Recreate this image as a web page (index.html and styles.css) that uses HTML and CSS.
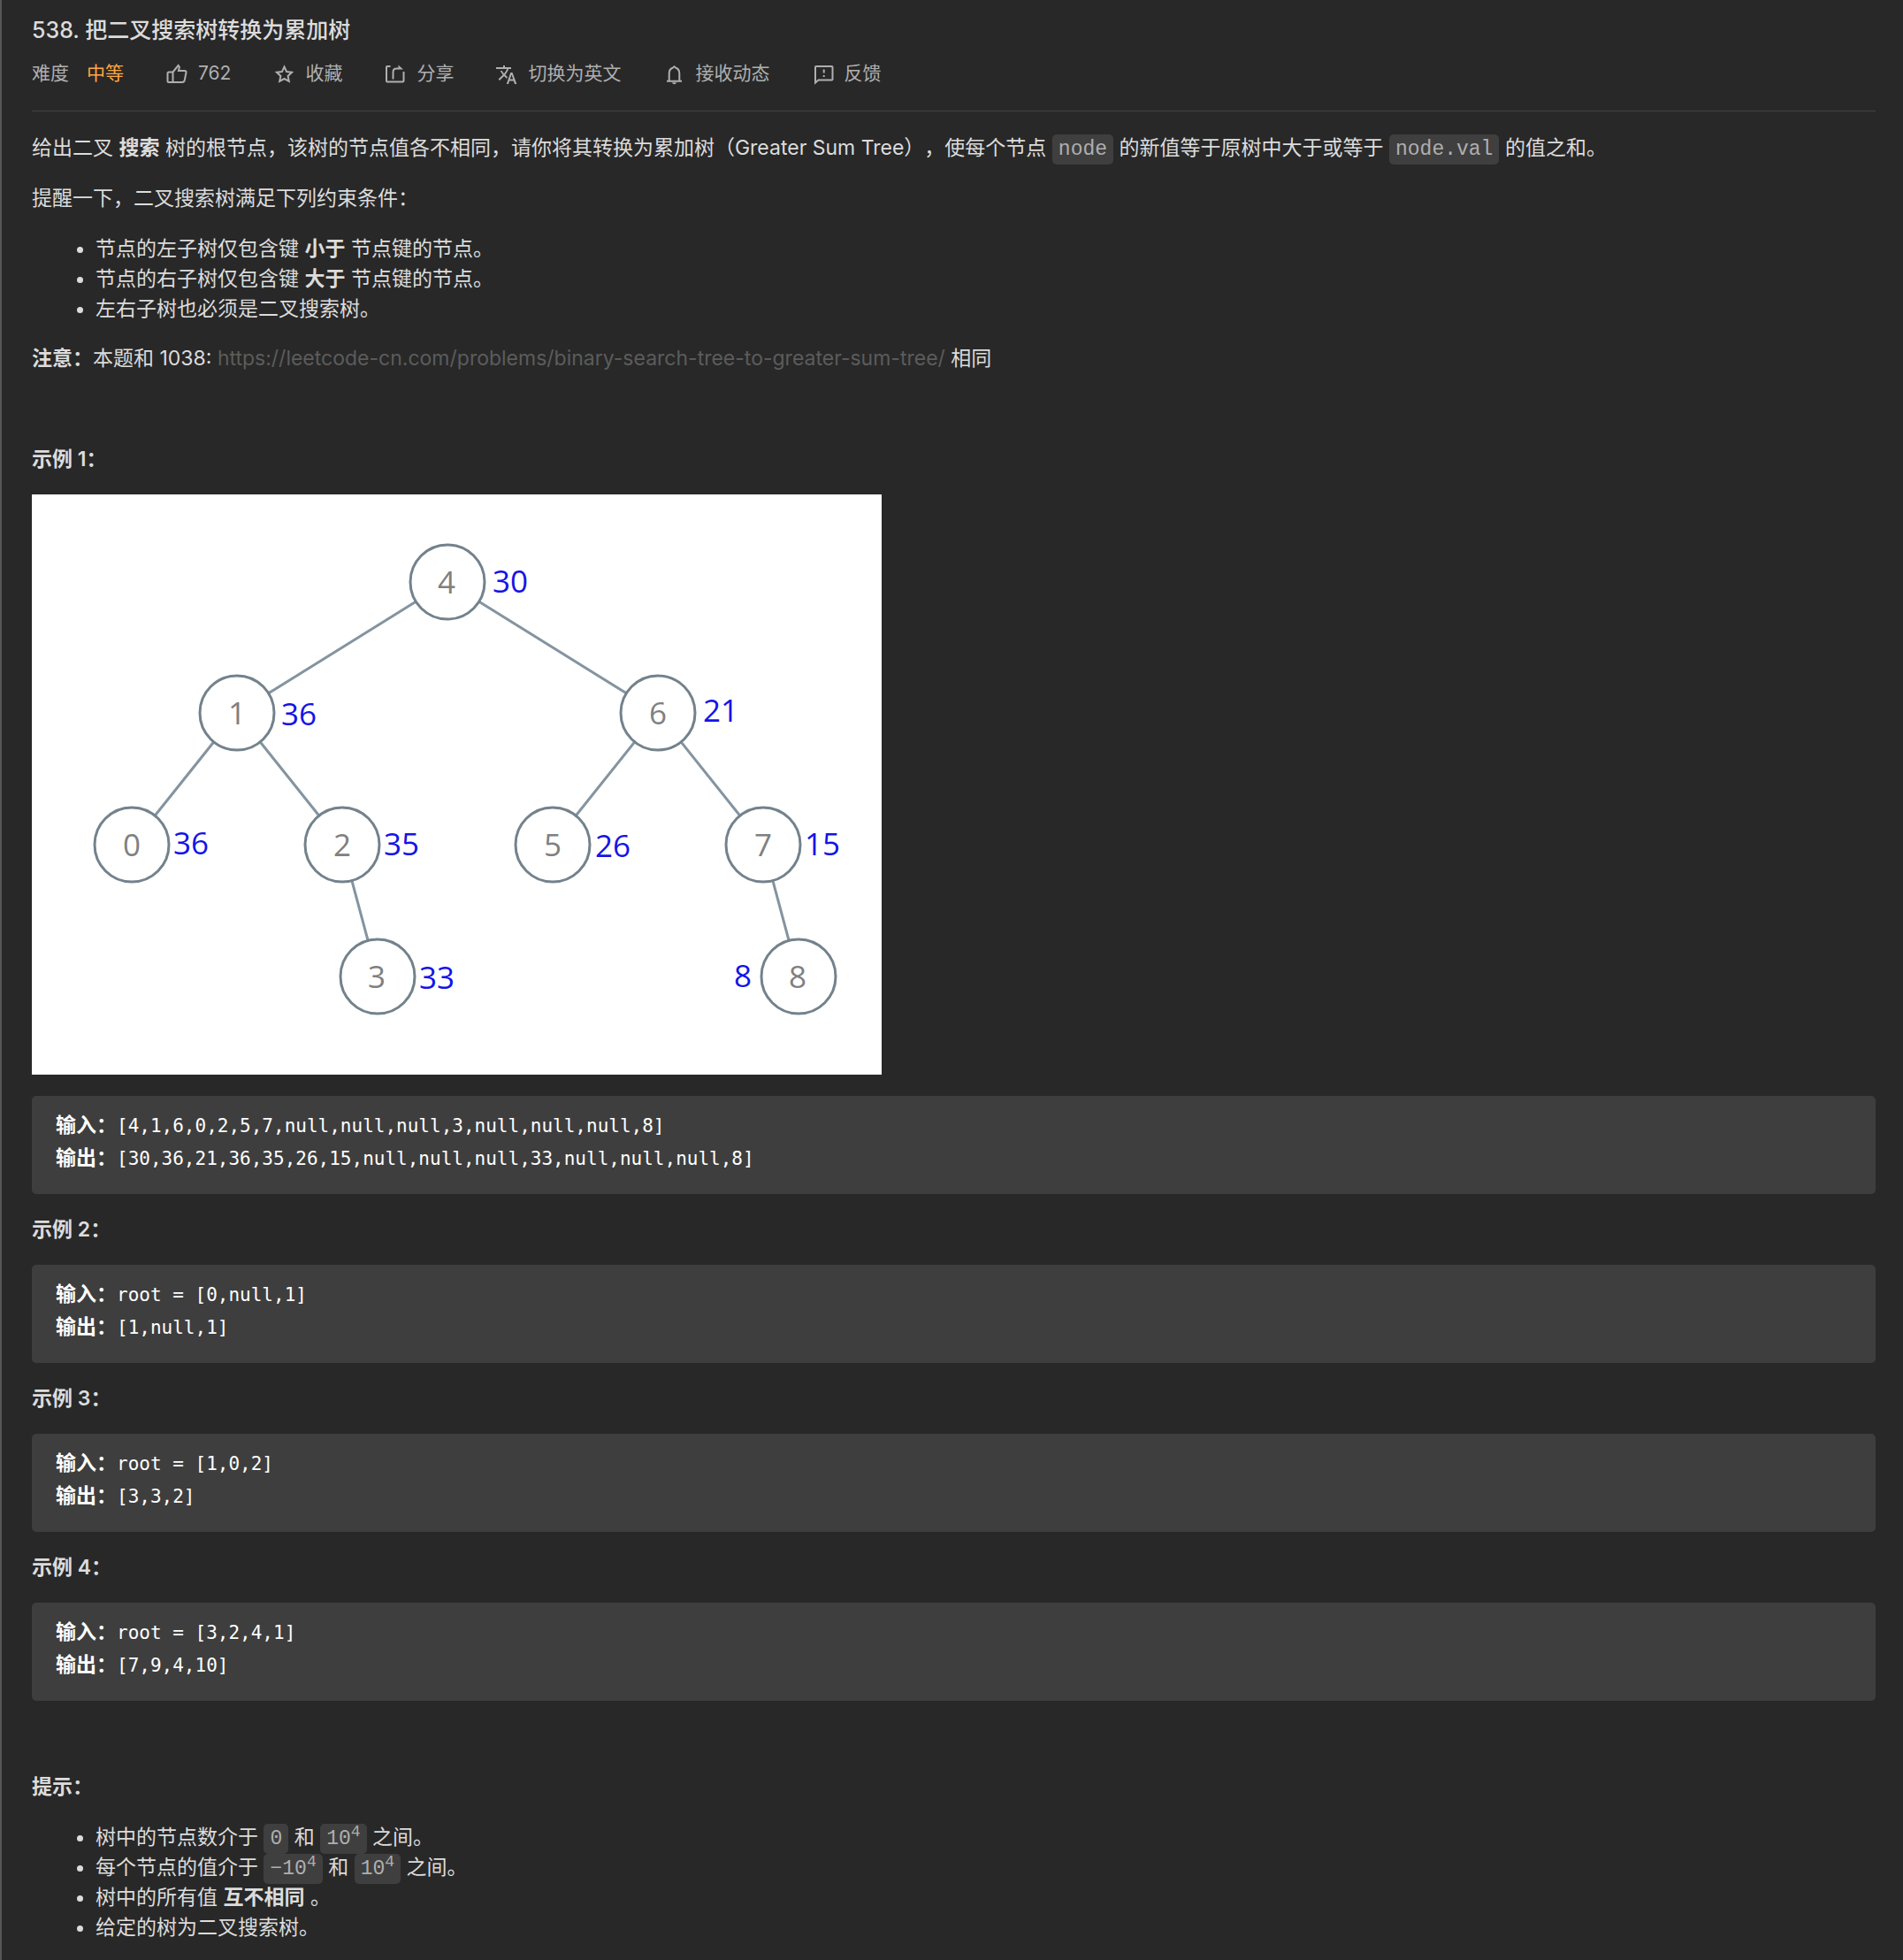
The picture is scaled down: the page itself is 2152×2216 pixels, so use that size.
FILE: index.html
```
<!DOCTYPE html>
<html lang="zh-CN">
<head>
<meta charset="utf-8">
<meta name="viewport" content="width=device-width, initial-scale=1">
<title>538. 把二叉搜索树转换为累加树</title>
<link rel="stylesheet" href="styles.css">
</head>
<body>
<main class="problem">
  <header class="problem-header">
    <h1 class="problem-title">538. 把二叉搜索树转换为累加树</h1>
    <div class="toolbar">
      <div class="difficulty"><span>难度</span><span class="difficulty-level">中等</span></div>
      <button type="button" class="tool">
        <svg class="icon" viewBox="0 0 24 24" aria-hidden="true"><path d="M7.5 10.500H3q-1.500 0-1.500 1.500v8.500q0 1.500 1.500 1.500h4.500zM7.500 10.500L13.600 3l1.300 2-1 4h6.600q2.400 0 2 2l-1.700 8.500q-.6 2.500-2.800 2.500H7.500"/></svg>
        <span>762</span>
      </button>
      <button type="button" class="tool">
        <svg class="icon" viewBox="0 0 24 24" aria-hidden="true"><path d="M12.500 4.500l2.600 5.600 5.900.7-4.400 4.100 1.200 6-5.300-2.900-5.300 2.900 1.200-6L4 10.800l5.900-.7z"/></svg>
        <span>收藏</span>
      </button>
      <button type="button" class="tool">
        <svg class="icon" viewBox="0 0 24 24" aria-hidden="true"><path d="M6.500 4H3Q2 4 2 5v15.500q0 1 1 1h17.500q1 0 1-1V10M9.500 18.500V10.500Q9.500 6.500 13.500 6.500H16"/><path class="icon-fill" d="M15.500 2.500l5.500 5h-5.500z"/></svg>
        <span>分享</span>
      </button>
      <button type="button" class="tool">
        <svg class="icon" viewBox="0 0 24 24" aria-hidden="true"><path class="icon-fill" d="M12.870 16.070l-2.540-2.510.03-.03c1.740-1.940 2.980-4.170 3.710-6.530H17V5h-7V3H8v2H0v2h12.170C11.500 8.920 10.440 10.750 9 12.350 8.070 11.320 7.300 10.190 6.690 9h-2c.73 1.630 1.730 3.170 2.980 4.560l-5.090 5.020L4 20l5-5 3.110 3.110zM18.500 11h-2.200L11.800 24h2.200l1.100-3.500h4.700L21 24h2.300zm-2.700 7.500l1.700-5 1.700 5z"/></svg>
        <span>切换为英文</span>
      </button>
      <button type="button" class="tool">
        <svg class="icon" viewBox="0 0 24 24" aria-hidden="true"><path d="M4 20.800h17M6.700 20.500V12q0-5 4-6.300l1.800-1.500 1.800 1.500q4 1.300 4 6.300v8.500"/><path class="icon-fill" d="M10 22.300h5q-.5 2-2.500 2t-2.500-2z"/></svg>
        <span>接收动态</span>
      </button>
      <button type="button" class="tool">
        <svg class="icon" viewBox="0 0 24 24" aria-hidden="true"><path d="M4 22.500V5q0-1 1-1h17.500q1 0 1 1v13.500q0 1-1 1H7.500z"/><path d="M13.700 7.500v4M13.700 14v2"/></svg>
        <span>反馈</span>
      </button>
    </div>
  </header>

  <article class="content">
    <p>给出二叉 <strong>搜索</strong> 树的根节点，该树的节点值各不相同，请你将其转换为累加树（Greater Sum Tree），使每个节点 <code>node</code> 的新值等于原树中大于或等于 <code>node.val</code> 的值之和。</p>
    <p>提醒一下，二叉搜索树满足下列约束条件：</p>
    <ul>
      <li>节点的左子树仅包含键 <strong>小于</strong> 节点键的节点。</li>
      <li>节点的右子树仅包含键 <strong>大于</strong> 节点键的节点。</li>
      <li>左右子树也必须是二叉搜索树。</li>
    </ul>
    <p><strong>注意：</strong>本题和 1038: <a href="https://leetcode-cn.com/problems/binary-search-tree-to-greater-sum-tree/">https://leetcode-cn.com/problems/binary-search-tree-to-greater-sum-tree/</a> 相同</p>
    <p>&nbsp;</p>
    <p><strong>示例 1：</strong></p>
    <svg class="tree" viewBox="0 0 961 656" role="img" aria-label="二叉搜索树与累加值">
      <path class="edges" d="M470 99L232 247L113 396M232 247L351 396L391 545M470 99L708 247L589 396M708 247L827 396L867 545"/>
      <g class="nodes">
        <circle cx="470" cy="99" r="42"/><circle cx="232" cy="247" r="42"/><circle cx="708" cy="247" r="42"/>
        <circle cx="113" cy="396" r="42"/><circle cx="351" cy="396" r="42"/><circle cx="589" cy="396" r="42"/>
        <circle cx="827" cy="396" r="42"/><circle cx="391" cy="545" r="42"/><circle cx="867" cy="545" r="42"/>
      </g>
      <g class="keys">
        <text x="469" y="112">4</text><text x="232" y="260">1</text><text x="708" y="260">6</text>
        <text x="113" y="409">0</text><text x="351" y="409">2</text><text x="589" y="409">5</text>
        <text x="827" y="409">7</text><text x="390" y="558">3</text><text x="866" y="558">8</text>
      </g>
      <g class="sums">
        <text x="541" y="111">30</text><text x="302" y="261">36</text><text x="779" y="257">21</text>
        <text x="180" y="407">36</text><text x="418" y="408">35</text><text x="657" y="410">26</text>
        <text x="894" y="408">15</text><text x="458" y="559">33</text><text x="804" y="557">8</text>
      </g>
    </svg>
    <pre><strong>输入：</strong>[4,1,6,0,2,5,7,null,null,null,3,null,null,null,8]
<strong>输出：</strong>[30,36,21,36,35,26,15,null,null,null,33,null,null,null,8]</pre>
    <p><strong>示例 2：</strong></p>
    <pre><strong>输入：</strong>root = [0,null,1]
<strong>输出：</strong>[1,null,1]</pre>
    <p><strong>示例 3：</strong></p>
    <pre><strong>输入：</strong>root = [1,0,2]
<strong>输出：</strong>[3,3,2]</pre>
    <p><strong>示例 4：</strong></p>
    <pre><strong>输入：</strong>root = [3,2,4,1]
<strong>输出：</strong>[7,9,4,10]</pre>
    <p>&nbsp;</p>
    <p><strong>提示：</strong></p>
    <ul>
      <li>树中的节点数介于 <code>0</code> 和 <code>10<sup>4</sup></code> 之间。</li>
      <li>每个节点的值介于 <code>−10<sup>4</sup></code> 和 <code>10<sup>4</sup></code> 之间。</li>
      <li>树中的所有值 <strong>互不相同</strong> 。</li>
      <li>给定的树为二叉搜索树。</li>
    </ul>
  </article>
</main>
</body>
</html>
```
FILE: styles.css
```
* {
  box-sizing: border-box;
}

body {
  margin: 0;
  background: #282828;
  color: #dcdcdc;
  font-family: Inter, "Noto Sans CJK SC", sans-serif;
  font-size: 23px;
  line-height: 34px;
  text-spacing-trim: space-all;
}

.problem {
  min-height: 100vh;
  padding: 16px 31px 0 34px;
  border-left: 2px solid #565656;
}

.problem-header {
  padding-bottom: 25px;
  border-bottom: 1px solid #424242;
}

.problem-title {
  margin: 0 0 14px;
  font-size: 25px;
  font-weight: 500;
  line-height: 36px;
}

.toolbar {
  display: flex;
  flex-wrap: wrap;
  align-items: center;
  gap: 0 48px;
  color: #afafaf;
  font-size: 21px;
}

.difficulty {
  display: flex;
  gap: 20px;
}

.difficulty-level {
  color: #ffa742;
}

.tool {
  display: flex;
  align-items: center;
  gap: 12px;
  padding: 0;
  border: 0;
  background: none;
  color: inherit;
  font: inherit;
  cursor: pointer;
}

.icon {
  width: 24px;
  height: 24px;
  overflow: visible;
  fill: none;
  stroke: currentColor;
  stroke-width: 2;
}

.icon-fill {
  fill: currentColor;
  stroke: none;
}

.content {
  padding-top: 24px;
}

.content p {
  margin: 0 0 23px;
}

.content ul {
  margin: 0 0 22px;
  padding-left: 72px;
}

.content a {
  color: #5c5c5c;
  text-decoration: none;
}

strong {
  font-weight: 600;
}

code {
  padding: 4px 7px;
  border-radius: 5px;
  background: #3f3f3f;
  color: #afafaf;
  font-family: "Liberation Mono", monospace;
  font-size: 23px;
  line-height: 24px;
}

sup {
  font-size: 18px;
  line-height: 18px;
}

.tree {
  display: block;
  width: 961px;
  max-width: 100%;
  margin-bottom: 24px;
  background: #fff;
}

.edges {
  fill: none;
  stroke: #8494a0;
  stroke-width: 3;
}

.nodes {
  fill: #fff;
  stroke: #73828c;
  stroke-width: 3;
}

.keys,
.sums {
  font-family: "Open Sans", sans-serif;
  font-size: 35px;
  text-anchor: middle;
}

.keys {
  fill: #808080;
}

.sums {
  fill: #1414e8;
  font-weight: 500;
}

pre {
  margin: 0 0 23px;
  padding: 16px 27px 21px;
  overflow-x: auto;
  border-radius: 5px;
  background: #3e3e3e;
  color: #fff;
  font-family: "DejaVu Sans Mono", "Noto Sans CJK SC", monospace;
  font-size: 21px;
  line-height: 37px;
}

pre strong {
  font-family: "Noto Sans CJK SC", sans-serif;
  font-size: 23px;
  line-height: 24px;
}
```
